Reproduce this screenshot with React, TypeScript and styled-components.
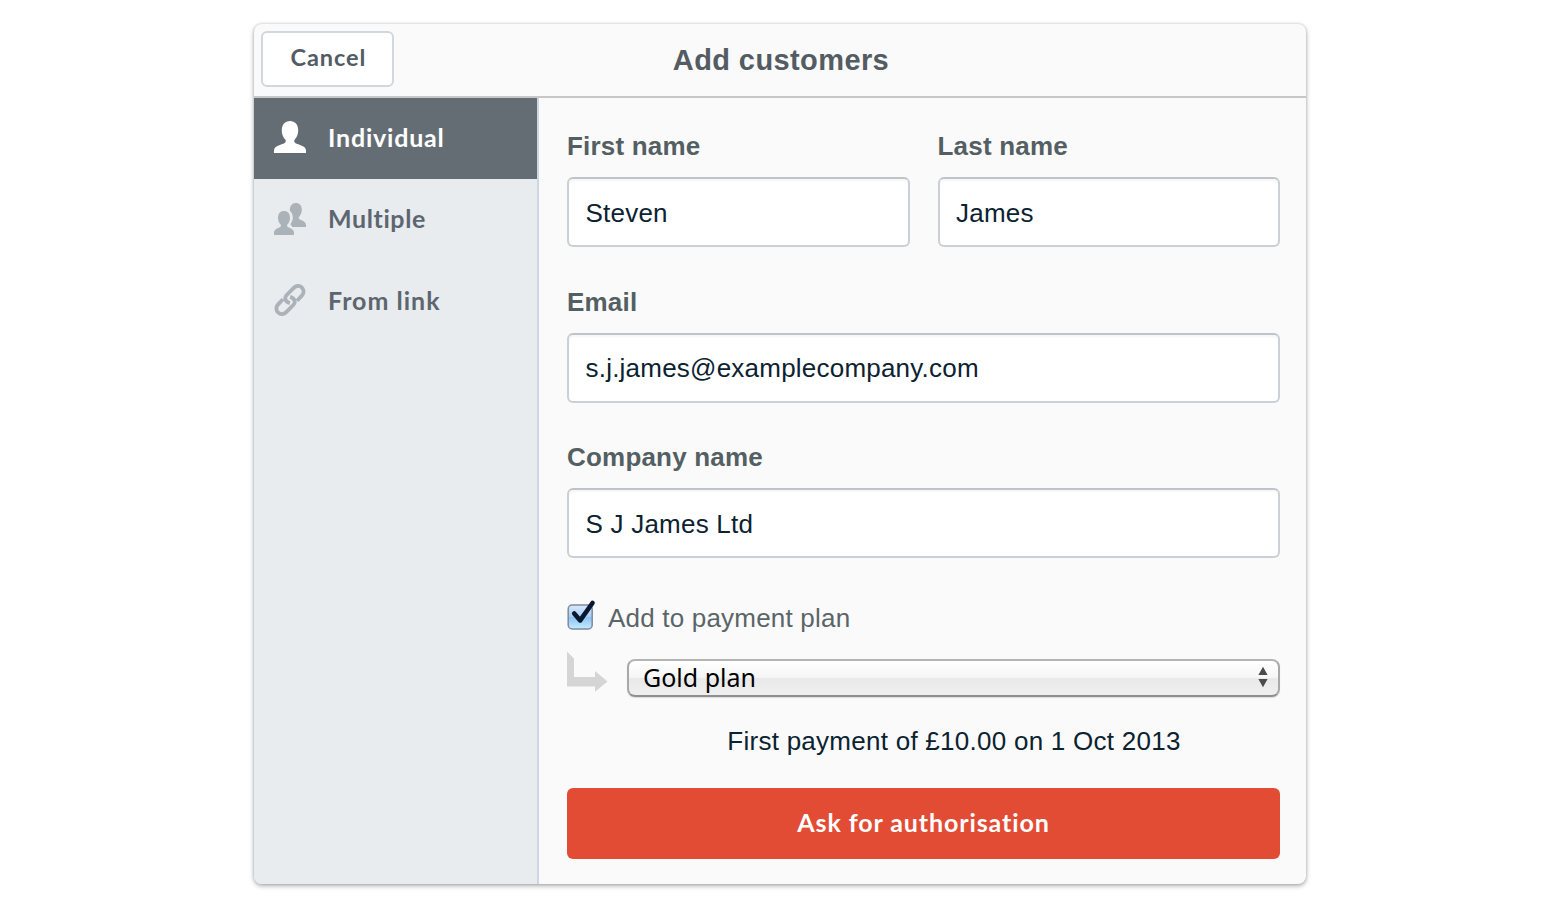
import React from "react";
import styled, { createGlobalStyle, css } from "styled-components";

const Global = createGlobalStyle`
  *{box-sizing:border-box}
  body{margin:0;background:#fff;font-family:"Liberation Sans",Arial,sans-serif}
`;
const Page = styled.main`height:906px;padding-top:24px;display:flex;justify-content:center;align-items:flex-start;`;
const Card = styled.section`
  width:1052px;height:860px;border-radius:8px;background:#fafafa;overflow:hidden;
  display:flex;flex-direction:column;
  box-shadow:0 2px 5px rgba(0,0,0,.3),0 0 3px rgba(0,0,0,.18);
`;
const Header = styled.header`
  height:73.5px;flex:none;border-bottom:2px solid #c6c7c8;padding:7px 7.4px;
  display:grid;grid-template-columns:133px 1fr 133px;align-items:start;
`;
const Cancel = styled.button`
  width:133px;height:56px;border:2px solid #d2d7dd;border-radius:6px;background:#fff;padding:0 0 2px 1px;
  font:700 23.5px/1 Lato,sans-serif;letter-spacing:.9px;color:#515c65;
`;
const Title = styled.h1`margin:0;padding:12px 0 0 2px;text-align:center;font-size:29px;line-height:34px;letter-spacing:.4px;color:#535c62;`;
const Body = styled.div`flex:1;display:flex;`;
const Sidebar = styled.nav`width:285px;background:#e8ecef;border-right:2px solid #ccd7e5;`;
const NavItem = styled.a<{ $active?: boolean; $tracking: number }>`
  height:81.5px;padding:0 0 2px 20px;display:flex;align-items:center;gap:22px;
  font:700 25px/1 Lato,sans-serif;letter-spacing:${(p) => p.$tracking}px;color:#5d666f;
  svg{width:32px;height:32px;flex:none;color:#abb3b9}
  ${(p) => p.$active && css`background:#656d74;color:#fff;svg{color:#fff}`}
`;
const Form = styled.form`flex:1;padding:31.5px 26px 0 28px;display:flex;flex-direction:column;`;
const Fields = styled.div`display:grid;grid-template-columns:1fr 1fr;gap:37.5px 28px;`;
const Field = styled.label<{ $wide?: boolean }>`
  display:flex;flex-direction:column;grid-column:${(p) => (p.$wide ? "1 / -1" : "auto")};
  font-size:26px;font-weight:700;line-height:34px;letter-spacing:.2px;color:#545f63;
`;
const Input = styled.input`
  width:100%;height:70px;margin-top:14px;padding:2px 16.5px 0;border:2px solid #cbd0d6;border-top-color:#bfc4ca;border-radius:6px;
  background:#fff;box-shadow:inset 0 2px 2px rgba(0,0,0,.04);
  font:400 26px "Liberation Sans",Arial,sans-serif;letter-spacing:.22px;color:#0b2231;
`;
const CheckRow = styled.label`
  display:flex;align-items:center;gap:12px;height:36px;margin-top:42px;
  font-size:26px;letter-spacing:.2px;color:#5a6569;
  svg{width:29px;height:34px;flex:none;margin-top:-5px}
`;
const PlanRow = styled.div`display:flex;align-items:flex-start;height:46px;margin-top:14px;gap:19px;
  svg{flex:none}
`;
const Select = styled.div`
  flex:1;height:38px;margin-top:9px;padding:0 10px 2px 14px;display:flex;align-items:center;justify-content:space-between;
  border:2px solid #a8a8a8;border-top-color:#b4b4b4;border-bottom-color:#8f8f8f;border-radius:8px;
  background:linear-gradient(#fff 0%,#f6f6f6 48%,#e9e9e9 52%,#efefef 100%);box-shadow:0 1px 1px rgba(0,0,0,.12);
  font:400 25px/1 "Noto Sans",sans-serif;color:#000;
`;
const Note = styled.p`margin:28px 0 0 61px;text-align:center;font-size:26px;line-height:34px;letter-spacing:.26px;color:#0b2231;`;
const Submit = styled.button`
  height:70.5px;margin-top:30px;border:0;border-radius:6px;background:#e34c34;color:#fff;padding:0 0 2px;
  font:700 25px/1 Lato,sans-serif;letter-spacing:.9px;
`;

const PersonIcon = () => (
  <svg viewBox="0 0 32 32" fill="currentColor">
    <path d="M16 0c5 0 8.200 3.600 8.200 9.200 0 4.800-1.800 7.400-3.400 9.200-.9 1-.8 2.800.5 3.500 3.200 1.900 10.700 2.600 10.700 7.600V32H0v-2.500c0-5 7.500-5.700 10.700-7.600 1.300-.7 1.400-2.500.5-3.500-1.600-1.800-3.400-4.400-3.400-9.200C7.800 3.600 11 0 16 0z" />
  </svg>
);
const PeopleIcon = () => (
  <svg viewBox="0 0 32 32" fill="currentColor">
    <path d="M21.800 0c3.700 0 6 2.700 6 6.500 0 3.600-1.200 5.500-2.500 7-.8.9-.7 2.300.3 2.800 2.300 1.300 6.400 2 6.400 6V24H18.200c-.3-1-.9-2-1.900-2.800 1.500-2 2.500-4 2.500-6.700 0-2.600-.9-5-3-6.700C15.500 3.500 18 0 21.800 0z" />
    <path d="M10 8c3.800 0 6 2.700 6 6.500 0 3.600-1.200 5.400-2.400 6.800-.8.900-.7 2.300.3 2.800 2.300 1.300 6.100 2 6.100 6V32H0v-1.900c0-4 3.800-4.700 6.100-6 1-.5 1.100-1.900.3-2.800C5.200 19.900 4 18.100 4 14.500 4 10.700 6.200 8 10 8z" />
  </svg>
);
const LinkIcon = () => (
  <svg viewBox="0 0 32 32" fill="none" stroke="currentColor" strokeWidth="3.800">
    <path d="M15.900 19.200C11.400 18 9.800 14.100 12.700 11L19.500 4.100c2.500-2.500 5.800-3 8.200-.8s2.600 5.700.2 8.300L23 16.700" />
    <path d="M16.100 12.800c4.500 1.200 6.100 5.100 3.200 8.200l-6.800 6.900c-2.500 2.500-5.800 3-8.200.8s-2.600-5.700-.2-8.300L9 15.300" />
  </svg>
);
const CheckIcon = () => (
  <svg viewBox="0 0 29 34">
    <defs>
      <linearGradient id="checkFill" x2="0" y2="1">
        <stop stopColor="#d8e9fa" />
        <stop offset=".48" stopColor="#a8cff5" />
        <stop offset=".52" stopColor="#8fc3f3" />
        <stop offset="1" stopColor="#c3ecff" />
      </linearGradient>
    </defs>
    <rect x="1.200" y="6" width="24" height="24" rx="4" fill="url(#checkFill)" stroke="#7f89a0" strokeWidth="1.500" />
    <path d="M7.200 14.500l6 6.900L25.500 4" fill="none" stroke="#08192f" strokeWidth="4.600" strokeLinecap="round" strokeLinejoin="round" />
  </svg>
);
const ArrowIcon = () => (
  <svg width="41" height="43" viewBox="0 0 41 43">
    <path d="M0 1.500l7 7V27h21v-6l12.500 10.500L28 41.800v-5.300H0z" fill="#d5d5d5" />
  </svg>
);
const StepperIcon = () => (
  <svg width="10" height="22" viewBox="0 0 10 22" fill="#4b4b4b">
    <path d="M5 .8L9.600 9H.4zM5 21.200L.4 13h9.200z" />
  </svg>
);

export default function App() {
  return (
    <>
      <Global />
      <Page>
        <Card>
          <Header>
            <Cancel type="button">Cancel</Cancel>
            <Title>Add customers</Title>
          </Header>
          <Body>
            <Sidebar>
              <NavItem $active $tracking={0.8}><PersonIcon />Individual</NavItem>
              <NavItem $tracking={0.6}><PeopleIcon />Multiple</NavItem>
              <NavItem $tracking={1}><LinkIcon />From link</NavItem>
            </Sidebar>
            <Form>
              <Fields>
                <Field>First name<Input defaultValue="Steven" /></Field>
                <Field>Last name<Input defaultValue="James" /></Field>
                <Field $wide>Email<Input defaultValue="s.j.james@examplecompany.com" /></Field>
                <Field $wide>Company name<Input defaultValue="S J James Ltd" /></Field>
              </Fields>
              <CheckRow><CheckIcon />Add to payment plan</CheckRow>
              <PlanRow><ArrowIcon /><Select>Gold plan<StepperIcon /></Select></PlanRow>
              <Note>First payment of £10.00 on 1 Oct 2013</Note>
              <Submit type="button">Ask for authorisation</Submit>
            </Form>
          </Body>
        </Card>
      </Page>
    </>
  );
}
